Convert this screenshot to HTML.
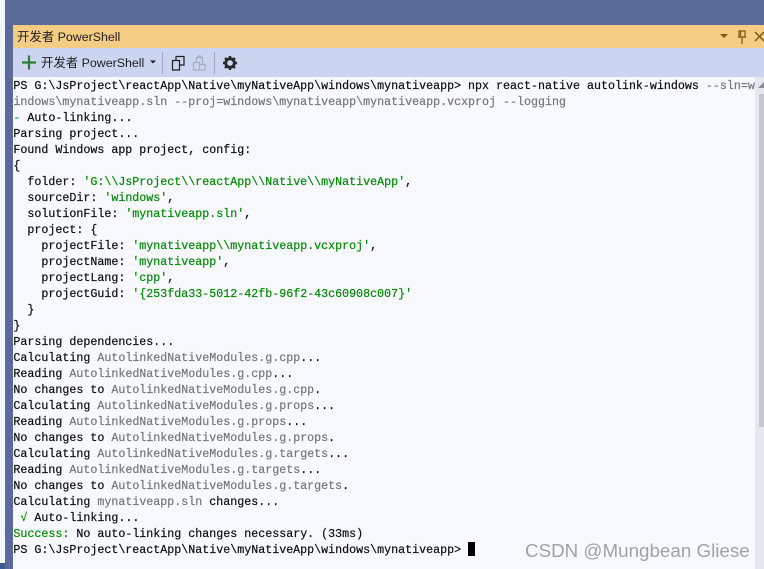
<!DOCTYPE html>
<html><head><meta charset="utf-8">
<style>
html,body{margin:0;padding:0;width:764px;height:569px;overflow:hidden;background:#f8f9ff}
body{position:relative;font-family:"Liberation Sans","Noto Sans CJK SC",sans-serif}
.a{position:absolute}
#term{position:absolute;left:13px;top:77px;width:742px;height:492px;background:#f8f9ff;overflow:hidden}
pre{margin:0;position:absolute;left:0.4px;top:1px;font:11.67px/16px "Liberation Mono",monospace;color:#0c0c0c;white-space:pre;-webkit-text-stroke:0.2px currentColor}
.g{color:#767676}.s{color:#008a00}.c{color:#0a8a9a}
</style></head><body>
<div class="a" style="left:0;top:0;width:5px;height:563px;background:#f6f8ff"></div>
<div class="a" style="left:0;top:563px;width:5px;height:6px;background:#3f5a96"></div>
<div class="a" style="left:5px;top:0;width:8px;height:569px;background:#5b6a99"></div>
<div class="a" style="left:5px;top:0;width:759px;height:25px;background:#5b6a99"></div>
<div class="a" style="left:13px;top:25px;width:751px;height:23px;background:#f5cc84"></div>
<div class="a" style="left:17px;top:29px;font-size:12.4px;line-height:17px;color:#1e1e1e;white-space:nowrap">开发者 PowerShell</div>
<svg class="a" style="left:714px;top:25px" width="50" height="23" fill="none">
<path d="M6 9h8l-4 4z" fill="#7a5a10"/>
<path d="M25 6h6v6h-6zM24 12h8M28 12v7M26.500 6v6" stroke="#7a5a10" stroke-width="1.200"/>
<path d="M41 7l9 9M50 7l-9 9" stroke="#7a5a10" stroke-width="1.500"/>
</svg>
<div class="a" style="left:13px;top:48px;width:751px;height:29px;background:#ccd5f0"></div>
<svg class="a" style="left:13px;top:48px" width="240" height="29" fill="none">
<path d="M9 14.500h14M16 7.500v14" stroke="#2f7d32" stroke-width="2.200"/>
<path d="M137 12.500h6l-3 3z" fill="#1e1e1e"/>
<path d="M149.500 4v22" stroke="#9aa8cf"/>
<path d="M159.500 12.500h7v9.500h-7zM163 12V8.500h8V17h-4" stroke="#1e1e1e" stroke-width="1.200"/>
<path d="M180.500 14.500h6v7.500h-6zM186.500 16.500h5.500v5.500h-5.500zM183.500 14V9.500h6V16M185.500 9.500V8h2v1.500" stroke="#a4acc4" stroke-width="1.200"/>
<path d="M201.500 4v22" stroke="#9aa8cf"/>
<circle cx="217" cy="15" r="4.300" stroke="#2a2a2a" stroke-width="2.800"/>
<path d="M217 8v14M210 15h14M212 10l10 10M222 10l-10 10" stroke="#2a2a2a" stroke-width="2.400" stroke-dasharray="2.400 9.400"/>
</svg>
<div class="a" style="left:41px;top:55px;font-size:12.4px;line-height:17px;color:#1e1e1e;white-space:nowrap">开发者 PowerShell</div>
<div id="term"><pre>PS G:\JsProject\reactApp\Native\myNativeApp\windows\mynativeapp&gt; npx react-native autolink-windows <span class="g">--sln=w</span>
<span class="g">indows\mynativeapp.sln --proj=windows\mynativeapp\mynativeapp.vcxproj --logging</span>
<span class="c">-</span> Auto-linking...
Parsing project...
Found Windows app project, config:
{
  folder: <span class="s">'G:\\JsProject\\reactApp\\Native\\myNativeApp'</span>,
  sourceDir: <span class="s">'windows'</span>,
  solutionFile: <span class="s">'mynativeapp.sln'</span>,
  project: {
    projectFile: <span class="s">'mynativeapp\\mynativeapp.vcxproj'</span>,
    projectName: <span class="s">'mynativeapp'</span>,
    projectLang: <span class="s">'cpp'</span>,
    projectGuid: <span class="s">'{253fda33-5012-42fb-96f2-43c60908c007}'</span>
  }
}
Parsing dependencies...
Calculating <span class="g">AutolinkedNativeModules.g.cpp</span>...
Reading <span class="g">AutolinkedNativeModules.g.cpp</span>...
No changes to <span class="g">AutolinkedNativeModules.g.cpp</span>.
Calculating <span class="g">AutolinkedNativeModules.g.props</span>...
Reading <span class="g">AutolinkedNativeModules.g.props</span>...
No changes to <span class="g">AutolinkedNativeModules.g.props</span>.
Calculating <span class="g">AutolinkedNativeModules.g.targets</span>...
Reading <span class="g">AutolinkedNativeModules.g.targets</span>...
No changes to <span class="g">AutolinkedNativeModules.g.targets</span>.
Calculating <span class="g">mynativeapp.sln</span> changes...
 <span class="s">√</span> Auto-linking...
<span class="s">Success:</span> No auto-linking changes necessary. (33ms)
PS G:\JsProject\reactApp\Native\myNativeApp\windows\mynativeapp&gt;</pre></div>
<div class="a" style="left:468px;top:542px;width:7px;height:14px;background:#000"></div>
<div class="a" style="left:525px;top:538.500px;font-size:18.800px;line-height:24px;color:#a2a2a2;white-space:nowrap">CSDN @Mungbean Gliese</div>
<div class="a" style="left:755px;top:77px;width:9px;height:492px;background:#e6e6ef"></div>
<svg class="a" style="left:755px;top:77px" width="9" height="17"><path d="M3 11l6-6v6z" fill="#8a8a94"/></svg>
<div class="a" style="left:759px;top:94px;width:5px;height:333px;background:#c6c6ce"></div>
</body></html>
